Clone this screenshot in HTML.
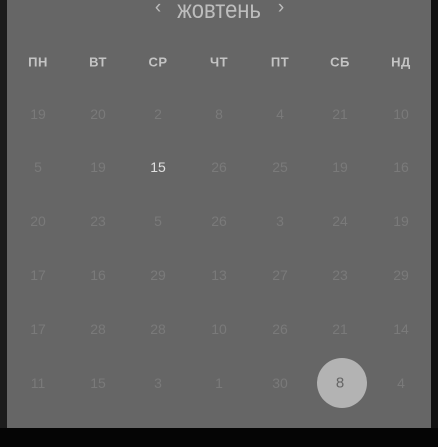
<!DOCTYPE html>
<html><head><meta charset="utf-8"><style>
html,body{margin:0;padding:0;width:438px;height:447px;overflow:hidden;background:#1c1c1c;font-family:"Liberation Sans","DejaVu Sans",sans-serif}
.bottom{position:absolute;left:0;top:428px;width:438px;height:19px;background:#050505}
.right{position:absolute;left:431px;top:0;width:7px;height:428px;background:#111}
.panel{position:absolute;left:7px;top:0;width:424px;height:428px;background:#666;}
.t{position:absolute;transform:translate(-50%,-50%);white-space:nowrap}
.title{color:#bdbdbd;font-size:22px;transform:translate(-50%,-50%) scaleY(1.15)}
.arr{color:#bdbdbd;font-size:19px}
.h{color:#c4c4c4;font-size:13px;font-weight:bold;letter-spacing:0.5px}
.d{color:#7a7a7a;font-size:14px}
.circle{position:absolute;left:317px;top:358px;width:50px;height:50px;border-radius:50%;background:#b3b3b3}
</style></head><body>
<div class="panel"></div><div class="right"></div><div class="bottom"></div>
<div class="t arr" style="left:158px;top:8px">‹</div>
<div class="t title" style="left:219px;top:10px">жовтень</div>
<div class="t arr" style="left:281px;top:8px">›</div>
<div class="circle"></div>
<div id="g"></div>
<script>
var xs=[38,98,158,219,280,340,401];
var hs=["ПН","ВТ","СР","ЧТ","ПТ","СБ","НД"];
var rows=[[19,20,2,8,4,21,10],[5,19,15,26,25,19,16],[20,23,5,26,3,24,19],[17,16,29,13,27,23,29],[17,28,28,10,26,21,14],[11,15,3,1,30,8,4]];
var ys=[114,167,221,275,329,383];
var h="";
hs.forEach(function(s,i){h+='<div class="t h" style="left:'+xs[i]+'px;top:62px">'+s+'</div>';});
rows.forEach(function(r,j){r.forEach(function(n,i){var st="";
if(j==1&&i==2)st="color:#e0e0e0;";
if(j==5&&i==5)st="color:#666;font-size:15px;";
h+='<div class="t d" style="left:'+xs[i]+'px;top:'+ys[j]+'px;'+st+'">'+n+'</div>';});});
document.getElementById("g").innerHTML=h;
</script>
</body></html>
